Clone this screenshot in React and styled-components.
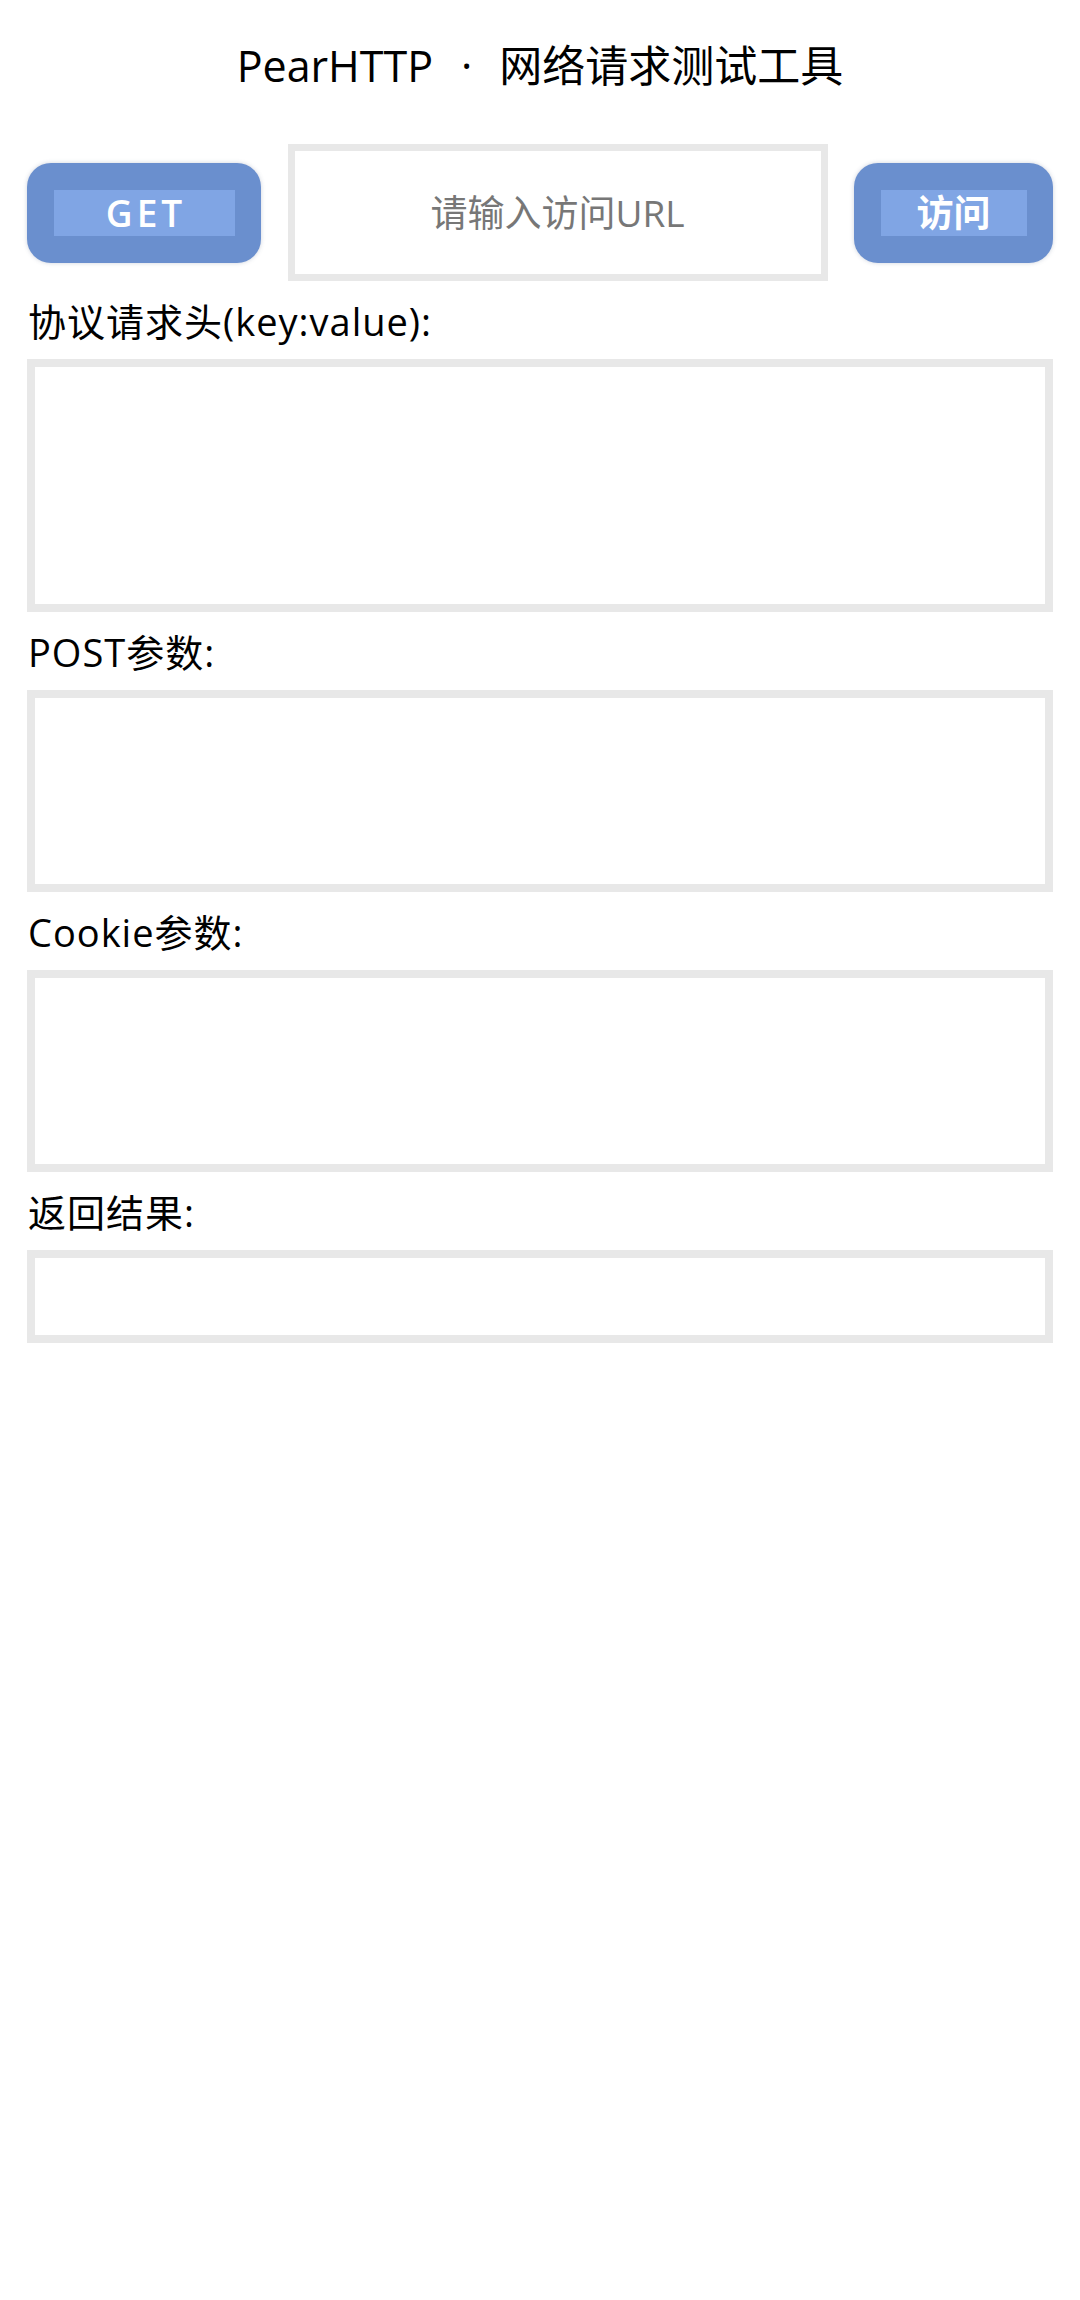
import React, { useState } from 'react';
import styled, { createGlobalStyle } from 'styled-components';

const GlobalStyle = createGlobalStyle`
  html, body {
    margin: 0;
    padding: 0;
    background: #ffffff;
  }
  body {
    font-family: "Open Sans", "Noto Sans CJK SC", sans-serif;
    color: #000000;
  }
  * {
    box-sizing: border-box;
  }
`;

const fields = [
  { key: 'headers', label: '协议请求头(key:value):', height: 253 },
  { key: 'post', label: 'POST参数:', height: 202 },
  { key: 'cookie', label: 'Cookie参数:', height: 202 },
  { key: 'result', label: '返回结果:', height: 93 },
];

function App() {
  const [method, setMethod] = useState('GET');
  const [url, setUrl] = useState('');
  const [values, setValues] = useState({});

  const onMethodToggle = () => {
    setMethod(method === 'GET' ? 'POST' : 'GET');
  };

  const onFieldChange = (key, value) => {
    setValues({ ...values, [key]: value });
  };

  return (
    <Page>
      <GlobalStyle />
      <Title>
        PearHTTP<Dot>·</Dot>网络请求测试工具
      </Title>
      <Toolbar>
        <Button $width={234} onClick={onMethodToggle}>
          <ButtonLabel $width={181} $spacing={4}>
            {method}
          </ButtonLabel>
        </Button>
        <UrlInput
          placeholder="请输入访问URL"
          value={url}
          onChange={e => setUrl(e.target.value)}
        />
        <Button $width={199}>
          <ButtonLabel $width={146} $spacing={0}>
            访问
          </ButtonLabel>
        </Button>
      </Toolbar>
      {fields.map(field => (
        <Field key={field.key}>
          <Label>{field.label}</Label>
          <Area
            $height={field.height}
            value={values[field.key] || ''}
            readOnly={field.key === 'result'}
            onChange={e => onFieldChange(field.key, e.target.value)}
          />
        </Field>
      ))}
    </Page>
  );
}

const Page = styled.div`
  width: 1080px;
  min-height: 2300px;
  padding: 0 27px;
`;

const Title = styled.h1`
  margin: 0;
  padding-top: 36px;
  height: 96px;
  font-size: 43px;
  line-height: 60px;
  font-weight: 400;
  text-align: center;
  white-space: nowrap;
`;

const Dot = styled.span`
  margin: 0 27px 0 28px;
`;

const Toolbar = styled.div`
  margin-top: 48px;
  display: flex;
  align-items: center;
  justify-content: space-between;
  height: 137px;
`;

const Button = styled.button`
  width: ${props => props.$width}px;
  height: 100px;
  padding: 0;
  border: none;
  border-radius: 24px;
  background: #6a8fce;
  box-shadow: 0 0 4px rgba(60, 80, 120, 0.25);
  display: flex;
  align-items: center;
  justify-content: center;
  cursor: pointer;
`;

const ButtonLabel = styled.span`
  display: inline-block;
  width: ${props => props.$width}px;
  height: 46px;
  line-height: 46px;
  background: #80a5e4;
  color: #ffffff;
  font-family: "Open Sans", "Noto Sans CJK SC", sans-serif;
  font-size: 37px;
  font-weight: 600;
  letter-spacing: ${props => props.$spacing}px;
  text-indent: ${props => props.$spacing}px;
  text-align: center;
`;

const UrlInput = styled.input`
  width: 540px;
  height: 137px;
  border: 7px solid #e8e8e8;
  border-radius: 0;
  outline: none;
  padding: 0 16px;
  font-family: "Open Sans", "Noto Sans CJK SC", sans-serif;
  font-size: 37px;
  color: #333333;
  text-align: center;

  &::placeholder {
    color: #777777;
  }
`;

const Field = styled.div`
  display: flex;
  flex-direction: column;
`;

const Label = styled.div`
  height: 78px;
  font-size: 38px;
  line-height: 80px;
  letter-spacing: 1px;
  padding-left: 1px;
  white-space: nowrap;
`;

const Area = styled.textarea`
  display: block;
  width: 100%;
  height: ${props => props.$height}px;
  border: 8px solid #e8e8e8;
  border-radius: 0;
  outline: none;
  resize: none;
  padding: 10px 14px;
  font-family: "Open Sans", "Noto Sans CJK SC", sans-serif;
  font-size: 32px;
  color: #333333;
`;

export default App;
